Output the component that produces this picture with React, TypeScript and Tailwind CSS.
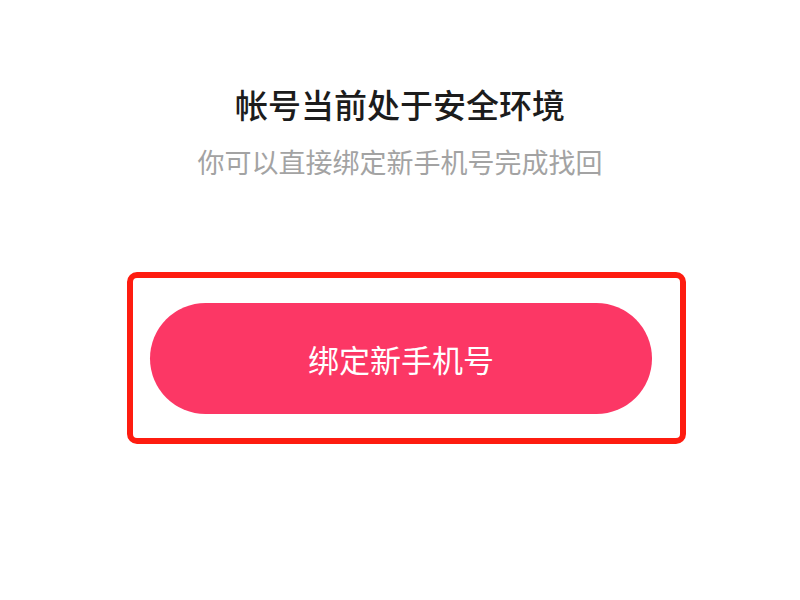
export default function App() {
  return (
    <div
      className="flex min-h-[600px] w-full flex-col items-center bg-white pt-[84px]"
      style={{ fontFamily: '"Noto Sans CJK SC", "Noto Sans", sans-serif' }}
    >
      <h1 className="text-[33px] font-medium leading-[40px] text-[#1c1c1c]">
        帐号当前处于安全环境
      </h1>
      <p className="mt-[20px] text-[27px] leading-[36px] text-[#a3a3a3]">
        你可以直接绑定新手机号完成找回
      </p>

      <div className="ml-[13px] mt-[92px] flex h-[172px] w-[559px] items-center rounded-[10px] border-[6px] border-[#fe1c10] pl-[17px] pt-[1px]">
        <button
          type="button"
          className="flex h-[111px] w-[502px] items-center justify-center rounded-full bg-[#fc3765] text-[31px] leading-none text-white"
        >
          绑定新手机号
        </button>
      </div>
    </div>
  );
}
